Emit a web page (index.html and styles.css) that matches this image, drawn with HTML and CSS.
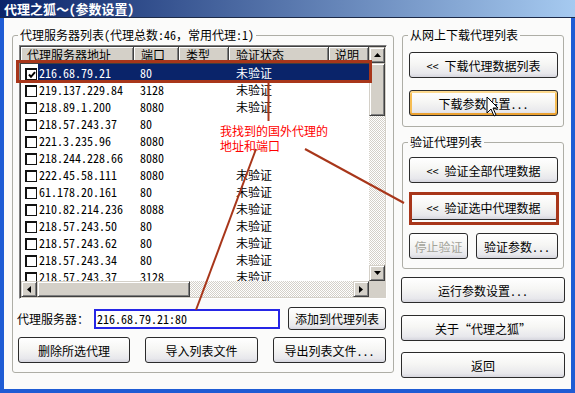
FILE: index.html
```html
<!DOCTYPE html>
<html lang="zh-CN">
<head>
    <meta charset="UTF-8">
    <title>代理之狐～(参数设置)</title>
    <link rel="stylesheet" href="styles.css">
</head>
<body>
<div class="window">
    <div class="titlebar">代理之狐～(参数设置)</div>

    <div class="client">
        <!-- Liste des proxys -->
        <div class="group left-group">
            <div class="group-title">代理服务器列表(代理总数:46，常用代理:1)</div>

            <div class="listview">
                <div class="list-body">
                    <div class="list-head">
                        <span class="h-ip">代理服务器地址</span>
                        <span class="h-port">端口</span>
                        <span class="h-type">类型</span>
                        <span class="h-state">验证状态</span>
                        <span class="h-note">说明</span>
                    </div>

                    <div class="row selected">
                        <span class="cb"><svg width="8" height="8" viewBox="0 0 8 8"><path d="M1 3.5 L3 5.8 L7 1.2" fill="none" stroke="#000" stroke-width="2"/></svg></span>
                        <div class="cells"><span class="c-ip">216.68.79.21</span><span class="c-port">80</span><span class="c-type"></span><span class="c-state">未验证</span></div>
                    </div>
                    <div class="row"><span class="cb"></span><div class="cells"><span class="c-ip">219.137.229.84</span><span class="c-port">3128</span><span class="c-type"></span><span class="c-state">未验证</span></div></div>
                    <div class="row"><span class="cb"></span><div class="cells"><span class="c-ip">218.89.1.200</span><span class="c-port">8080</span><span class="c-type"></span><span class="c-state">未验证</span></div></div>
                    <div class="row"><span class="cb"></span><div class="cells"><span class="c-ip">218.57.243.37</span><span class="c-port">80</span><span class="c-type"></span><span class="c-state"></span></div></div>
                    <div class="row"><span class="cb"></span><div class="cells"><span class="c-ip">221.3.235.96</span><span class="c-port">8080</span><span class="c-type"></span><span class="c-state"></span></div></div>
                    <div class="row"><span class="cb"></span><div class="cells"><span class="c-ip">218.244.228.66</span><span class="c-port">8080</span><span class="c-type"></span><span class="c-state"></span></div></div>
                    <div class="row"><span class="cb"></span><div class="cells"><span class="c-ip">222.45.58.111</span><span class="c-port">8080</span><span class="c-type"></span><span class="c-state">未验证</span></div></div>
                    <div class="row"><span class="cb"></span><div class="cells"><span class="c-ip">61.178.20.161</span><span class="c-port">80</span><span class="c-type"></span><span class="c-state">未验证</span></div></div>
                    <div class="row"><span class="cb"></span><div class="cells"><span class="c-ip">210.82.214.236</span><span class="c-port">8088</span><span class="c-type"></span><span class="c-state">未验证</span></div></div>
                    <div class="row"><span class="cb"></span><div class="cells"><span class="c-ip">218.57.243.50</span><span class="c-port">80</span><span class="c-type"></span><span class="c-state">未验证</span></div></div>
                    <div class="row"><span class="cb"></span><div class="cells"><span class="c-ip">218.57.243.62</span><span class="c-port">80</span><span class="c-type"></span><span class="c-state">未验证</span></div></div>
                    <div class="row"><span class="cb"></span><div class="cells"><span class="c-ip">218.57.243.34</span><span class="c-port">80</span><span class="c-type"></span><span class="c-state">未验证</span></div></div>
                    <div class="row"><span class="cb"></span><div class="cells"><span class="c-ip">218.57.243.37</span><span class="c-port">3128</span><span class="c-type"></span><span class="c-state">未验证</span></div></div>
                </div>

                <div class="vscroll">
                    <span class="sb-btn"><svg width="7" height="4" viewBox="0 0 7 4"><path d="M3.5 0 L7 4 L0 4 Z"/></svg></span>
                    <span class="sb-thumb v-thumb"></span>
                    <span class="sb-track"></span>
                    <span class="sb-btn"><svg width="7" height="4" viewBox="0 0 7 4"><path d="M0 0 L7 0 L3.5 4 Z"/></svg></span>
                </div>
                <div class="hscroll">
                    <span class="sb-btn"><svg width="4" height="7" viewBox="0 0 4 7"><path d="M0 3.5 L4 0 L4 7 Z"/></svg></span>
                    <span class="sb-thumb h-thumb"></span>
                    <span class="sb-track"></span>
                    <span class="sb-btn"><svg width="4" height="7" viewBox="0 0 4 7"><path d="M0 0 L4 3.5 L0 7 Z"/></svg></span>
                </div>
                <div class="corner"></div>
            </div>

            <div class="input-row">
                <label class="proxy-label">代理服务器：</label>
                <input type="text" class="proxy-input" value="216.68.79.21:80">
                <button class="btn add-btn">添加到代理列表</button>
            </div>

            <div class="btn-row">
                <button class="btn w112">删除所选代理</button>
                <button class="btn w113">导入列表文件</button>
                <button class="btn w113">导出列表文件...</button>
            </div>
        </div>

        <!-- Colonne de droite -->
        <div class="right-col">
            <div class="group">
                <div class="group-title">从网上下载代理列表</div>
                <button class="btn first">&lt;&lt; 下载代理数据列表</button>
                <button class="btn hot gap12">下载参数设置...</button>
            </div>

            <div class="group verify-group">
                <div class="group-title">验证代理列表</div>
                <button class="btn first-v">&lt;&lt; 验证全部代理数据</button>
                <button class="btn gap11">&lt;&lt; 验证选中代理数据</button>
                <div class="pair">
                    <button class="btn disabled stop-btn">停止验证</button>
                    <button class="btn param-btn">验证参数...</button>
                </div>
            </div>

            <button class="btn gap8">运行参数设置...</button>
            <button class="btn gap12">关于“代理之狐”</button>
            <button class="btn gap11">返回</button>
        </div>
    </div>

    <!-- Annotations -->
    <div class="note">我找到的国外代理的<br>地址和端口</div>
    <svg class="annot" width="575" height="393" viewBox="0 0 575 393">
        <g fill="none" stroke="#a8361a">
            <rect x="17.5" y="61.5" width="353" height="20" stroke-width="3"/>
            <line x1="268.5" y1="83" x2="268.5" y2="121" stroke-width="2"/>
            <line x1="256" y1="149" x2="196" y2="310" stroke-width="2"/>
            <line x1="305" y1="149" x2="404" y2="203" stroke-width="2"/>
            <rect x="410.5" y="193.5" width="147" height="30" stroke-width="3"/>
        </g>
        <path d="M487 97 L487 113 L491 109 L494 116 L496 115 L493 108 L498 108 Z" fill="#fff" stroke="#000" stroke-width="1"/>
    </svg>
</div>
</body>
</html>
```

FILE: styles.css
```css
* {
    box-sizing: border-box;
}

body {
    margin: 0;
    font-family: "Noto Sans Mono CJK SC", "Noto Sans CJK SC", sans-serif;
    font-size: 12px;
    color: #000;
}

/* Boutons (base) */
.btn {
    flex: none;
    display: flex;
    align-items: center;
    justify-content: center;
    width: 100%;
    height: 26px;
    padding: 0;
    border: 1px solid #2b2b2b;
    border-radius: 3px;
    font: inherit;
    color: #000;
    white-space: nowrap;
    background: linear-gradient(#ffffff, #f6f6f4 45%, #e8e8ec 85%, #d6d6de);
}

.btn.hot {
    box-shadow: inset 0 2px #fcd98e, inset 0 -2px #eba131, inset 2px 0 #f6bd53, inset -2px 0 #f6bd53;
}

.btn.disabled {
    color: #a3a39a;
}

/* Fenêtre */
.window {
    position: relative;
    width: 575px;
    height: 393px;
    display: flex;
    flex-direction: column;
    background: #1f5cd4;
    overflow: hidden;
}

.titlebar {
    height: 18px;
    padding-left: 4px;
    line-height: 17px;
    font-size: 13px;
    font-weight: bold;
    color: #fff;
    background: linear-gradient(to right, #0a246a, #a6caf0);
    border-bottom: 1px solid #1c2a48;
}

.client {
    flex: 1;
    margin: 0 4px 4px;
    padding: 17px 6px 0 8px;
    display: flex;
    align-items: flex-start;
    gap: 7px;
    background: #fbfbfa;
}

/* Groupes */
.group {
    border: 1px solid #aeaea6;
    border-radius: 3px;
    padding: 0 5px 10px 6px;
}

.group-title {
    width: fit-content;
    margin: -8px 0 0 -1px;
    padding: 0 2px;
    line-height: 14px;
    background: #fbfbfa;
}

.left-group {
    flex: none;
    width: 382px;
    padding: 0 6px 9px 6px;
}

/* Liste */
.listview {
    margin-top: 3px;
    width: 368px;
    height: 254px;
    display: grid;
    grid-template-columns: 348px 16px;
    grid-template-rows: 234px 16px;
    border: 1px solid;
    border-color: #808080 #fff #fff #808080;
    box-shadow: inset 1px 1px #404040, inset -1px -1px #d4d0c8;
    padding: 1px;
    background: #fff;
}

.list-body {
    overflow: hidden;
    background: #fff;
}

.list-head {
    display: flex;
    height: 17px;
    line-height: 15px;
    background: #d4d0c8;
}

.list-head span {
    flex: none;
    border-right: 1px solid #404040;
    border-bottom: 1px solid #404040;
    box-shadow: inset 1px 1px #fff, inset -1px -1px #808080;
    padding-left: 7px;
    white-space: nowrap;
}

.list-head .h-ip { width: 113px; padding-left: 6px; }
.list-head .h-port { width: 45px; }
.list-head .h-type { width: 50px; }
.list-head .h-state { width: 100px; }
.list-head .h-note { width: 40px; padding-left: 6px; }

.row {
    display: flex;
    height: 17px;
    line-height: 17px;
    white-space: nowrap;
}

.cb {
    flex: none;
    width: 12px;
    height: 12px;
    margin: 4px 1px 0 4px;
    display: flex;
    align-items: center;
    justify-content: center;
    background: #fff;
    border-style: solid;
    border-color: #111;
    border-width: 2px 1px 1px 2px;
}

.cells {
    flex: 1;
    display: flex;
}

.cells span {
    flex: none;
}

.c-ip { width: 96px; padding-left: 1px; }
.c-port { width: 45px; padding-left: 6px; }
.c-type { width: 50px; }
.c-state { width: 100px; padding-left: 7px; }

.row.selected .cells {
    background: #0a246a;
    color: #fff;
}

/* Barres de défilement */
.vscroll,
.hscroll {
    display: flex;
}

.vscroll {
    flex-direction: column;
}

.sb-btn,
.sb-thumb,
.corner {
    background: #d4d0c8;
}

.sb-btn,
.sb-thumb {
    flex: none;
    width: 16px;
    height: 16px;
    display: flex;
    align-items: center;
    justify-content: center;
    border: 1px solid;
    border-color: #d4d0c8 #404040 #404040 #d4d0c8;
    box-shadow: inset 1px 1px #fff, inset -1px -1px #808080;
}

.vscroll .v-thumb { height: 53px; }
.hscroll .h-thumb { width: 153px; }

.sb-track {
    flex: 1;
    background: repeating-conic-gradient(#d4d0c8 0 25%, #fff 0 50%);
    background-size: 2px 2px;
}

/* Champ + boutons du bas */
.input-row {
    display: flex;
    align-items: center;
    margin: 8px 1px 0 -2px;
}

.proxy-label {
    flex: none;
    white-space: nowrap;
}

.proxy-input {
    flex: none;
    width: 186px;
    height: 20px;
    margin-left: 5px;
    padding: 0 1px;
    border: 2px solid #2626e6;
    font: inherit;
    color: #000;
    background: #fff;
}

.btn.add-btn {
    width: 98px;
    height: 23px;
    margin-left: auto;
}

.btn-row {
    display: flex;
    justify-content: space-between;
    margin: 7px 1px 0 -1px;
}

.btn.w112 { width: 112px; }
.btn.w113 { width: 113px; }

/* Colonne de droite */
.right-col {
    flex: none;
    width: 164px;
    display: flex;
    flex-direction: column;
}

.right-col .group {
    margin: 0 1px;
}

.first { margin-top: 10px; }
.first-v { margin-top: 8px; }
.gap8 { margin-top: 8px; }
.gap11 { margin-top: 11px; }
.gap12 { margin-top: 12px; }

.right-col .verify-group {
    margin-top: 15px;
    padding-bottom: 9px;
}

.pair {
    display: flex;
    justify-content: space-between;
    margin-top: 13px;
}

.btn.stop-btn { width: 59px; }
.btn.param-btn { width: 82px; }

/* Annotations */
.note {
    position: absolute;
    left: 216px;
    top: 121px;
    width: 118px;
    height: 45px;
    padding: 2px 0 0 4px;
    line-height: 15px;
    color: #f00;
    background: #fff;
}

.annot {
    position: absolute;
    left: 0;
    top: 0;
    pointer-events: none;
}
```
